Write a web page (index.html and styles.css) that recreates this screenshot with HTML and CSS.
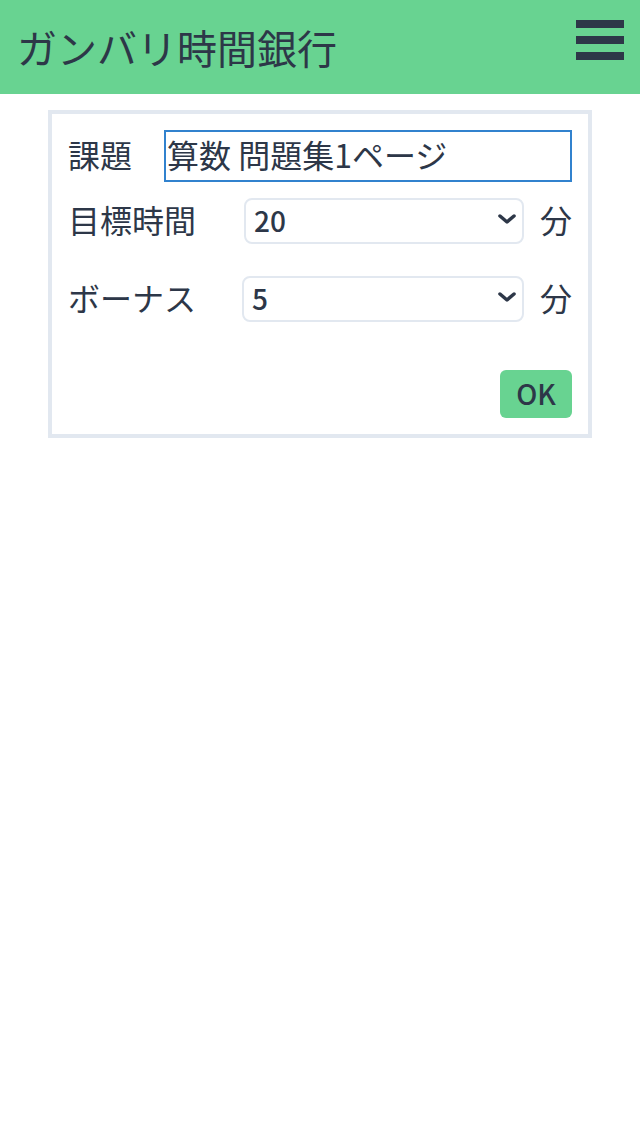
FILE: index.html
```html
<!DOCTYPE html>
<html lang="ja">
<head>
  <meta charset="UTF-8" />
  <meta name="viewport" content="width=device-width, initial-scale=1.0" />
  <title>ガンバリ時間銀行</title>
  <link rel="stylesheet" href="styles.css">
</head>
<body>
  <header class="header">
    <h1 class="title">ガンバリ時間銀行</h1>
    <button class="menu-btn" aria-label="メニュー">
      <span></span><span></span><span></span>
    </button>
  </header>

  <main class="card">
    <div class="row row-task">
      <label class="row-label" for="task">課題</label>
      <input class="task-input" id="task" type="text" value="算数 問題集1ページ" />
    </div>

    <div class="row row-target">
      <label class="row-label" for="target">目標時間</label>
      <div class="select-wrap">
        <select class="select" id="target">
          <option>10</option>
          <option>15</option>
          <option selected>20</option>
          <option>30</option>
        </select>
        <svg class="chevron" viewBox="0 0 18 10" aria-hidden="true">
          <path d="M2 2 L9 8 L16 2" />
        </svg>
      </div>
      <span class="unit">分</span>
    </div>

    <div class="row row-bonus">
      <label class="row-label" for="bonus">ボーナス</label>
      <div class="select-wrap">
        <select class="select" id="bonus">
          <option selected>5</option>
          <option>10</option>
          <option>15</option>
        </select>
        <svg class="chevron" viewBox="0 0 18 10" aria-hidden="true">
          <path d="M2 2 L9 8 L16 2" />
        </svg>
      </div>
      <span class="unit">分</span>
    </div>

    <div class="actions">
      <button class="btn-ok">OK</button>
    </div>
  </main>
</body>
</html>
```

FILE: styles.css
```css
body {
  margin: 0;
  font-family: "Noto Sans CJK JP", "Noto Sans", sans-serif;
  color: #2d3748;
  background: #fff;
}
.header {
  height: 94px;
  box-sizing: border-box;
  background: #68d391;
  padding: 20px 16px 0 17px;
  display: flex;
  justify-content: space-between;
  align-items: flex-start;
}
.title {
  margin: 0;
  font-size: 40px;
  font-weight: 400;
  line-height: 54px;
}
.menu-btn {
  width: 48px;
  height: 40px;
  padding: 0;
  border: none;
  background: none;
  display: flex;
  flex-direction: column;
  justify-content: space-between;
  cursor: pointer;
}
.menu-btn span {
  display: block;
  height: 8px;
  background: #2d3748;
}
.card {
  width: 544px;
  box-sizing: border-box;
  margin: 16px auto 0;
  border: 4px solid #e2e8f0;
  padding: 16px;
}
.row {
  display: flex;
  align-items: center;
}
.row-label {
  flex: none;
  font-size: 32px;
  line-height: 40px;
  margin-top: -4px;
}
.row-task {
  margin-bottom: 16px;
}
.row-task .row-label {
  width: 96px;
}
.row-target {
  margin-bottom: 32px;
}
.row-target .row-label {
  width: 176px;
}
.row-bonus {
  margin-bottom: 48px;
}
.row-bonus .row-label {
  width: 174px;
}
.task-input {
  flex: 1;
  min-width: 0;
  height: 52px;
  box-sizing: border-box;
  border: 2px solid #3182ce;
  border-radius: 0;
  padding: 0 1px 4px;
  font-family: inherit;
  font-size: 32px;
  color: #2d3748;
  outline: none;
}
.select-wrap {
  position: relative;
  flex: 1;
}
.select {
  width: 100%;
  height: 46px;
  box-sizing: border-box;
  border: 2px solid #e2e8f0;
  border-radius: 8px;
  background: #fff;
  padding: 0 8px 2px;
  font-family: inherit;
  font-size: 28px;
  font-weight: 500;
  color: #2d3748;
  appearance: none;
  -webkit-appearance: none;
}
.chevron {
  position: absolute;
  right: 8px;
  top: 16px;
  width: 18px;
  height: 10px;
  fill: none;
  stroke: #2d3748;
  stroke-width: 3.5;
  stroke-linecap: round;
  stroke-linejoin: round;
  pointer-events: none;
}
.unit {
  flex: none;
  margin-left: 16px;
  font-size: 32px;
  line-height: 40px;
  margin-top: -4px;
}
.actions {
  display: flex;
  justify-content: flex-end;
}
.btn-ok {
  width: 72px;
  height: 48px;
  border: none;
  border-radius: 6px;
  background: #68d391;
  color: #2d3748;
  font-family: inherit;
  font-size: 28px;
  font-weight: 500;
  padding: 0 0 2px;
  cursor: pointer;
}
```
